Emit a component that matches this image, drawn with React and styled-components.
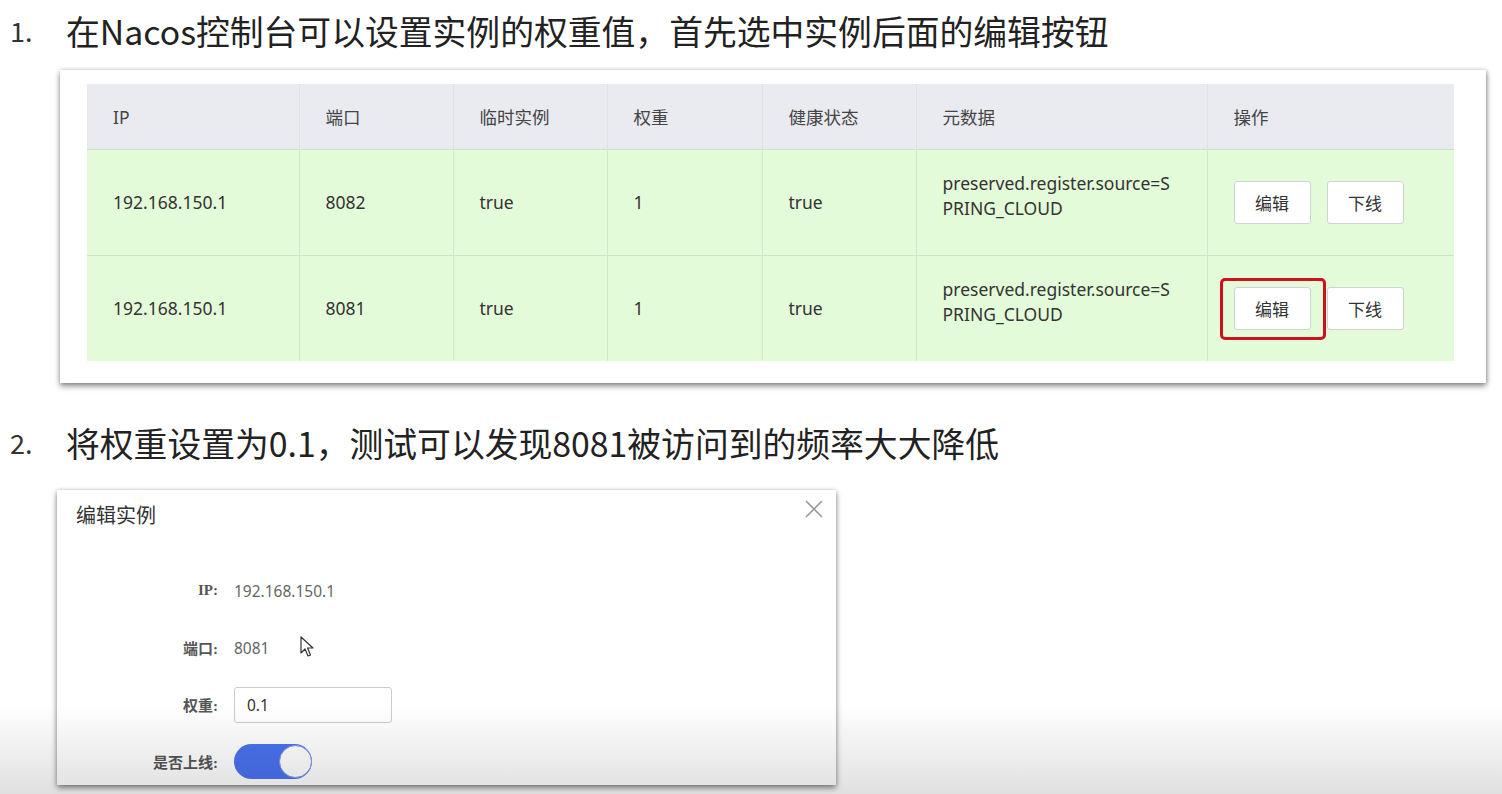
import React from "react";
import styled, { createGlobalStyle } from "styled-components";

const Global = createGlobalStyle`
  html, body { margin: 0; padding: 0; background: #fff; }
  body { font-family: "Noto Sans", "Noto Sans CJK SC", sans-serif; width: 1502px; height: 794px; overflow: hidden; }
`;

const Page = styled.div`
  position: relative;
  width: 1502px;
  height: 794px;
  display: flex;
  flex-direction: column;
`;

const Step = styled.div`
  display: flex;
  align-items: center;
  height: 60px;
  margin-top: ${p => p.$top}px;
  font-family: "Noto Sans CJK SC", "Noto Sans", sans-serif;
  font-size: 33.8px;
  color: #222;
`;

const StepNum = styled.span`
  width: 56px;
  padding-left: 10px;
  font-size: 27px;
  color: #333;
`;

const Shot = styled.div`
  margin: 10px 0 0 60px;
  width: 1426px;
  height: 313px;
  box-sizing: border-box;
  background: #fff;
  padding: 14px 32px 0 27px;
  box-shadow: 0 3px 6px rgba(0,0,0,0.45), 1px 0 4px rgba(0,0,0,0.2);
`;

const Table = styled.table`
  border-collapse: collapse;
  table-layout: fixed;
  width: 1367px;
  font-size: 17.5px;
  color: #333;
`;

const Th = styled.th`
  height: 65px;
  padding: 0 0 0 26px;
  text-align: left;
  font-weight: normal;
  background: #eaebf0;
  color: #444;
  line-height: 20px;
  border-left: 1px solid #dfe1e6;
  &:first-child { border-left: none; }
`;

const Td = styled.td`
  height: 105px;
  padding: 0 0 0 26px;
  background: #e4fbd9;
  border-left: 1px solid #d3e8c8;
  border-top: 1px solid #d0e3c6;
  line-height: 25px;
  &:first-child { border-left: none; }
`;

const Meta = styled.div`
  margin-top: -14px;
`;

const Actions = styled.div`
  display: flex;
  gap: 16px;
`;

const Btn = styled.button`
  width: 77px;
  height: 43px;
  background: #fff;
  border: 1px solid #cfd3d8;
  border-radius: 3px;
  font-family: "Noto Sans CJK SC", sans-serif;
  font-size: 17px;
  color: #333;
  padding: 0;
`;

const Marked = styled.span`
  position: relative;
  display: inline-flex;
  &::after {
    content: "";
    position: absolute;
    left: -14px;
    top: -9px;
    width: 100px;
    height: 56px;
    border: 3px solid #d0101f;
    border-radius: 5px;
  }
`;

const Dialog = styled.div`
  position: relative;
  margin: 18px 0 0 57px;
  width: 779px;
  height: 295px;
  box-sizing: border-box;
  background: #fff;
  box-shadow: 0 3px 6px rgba(0,0,0,0.45), 0 0 4px rgba(0,0,0,0.15);
  padding: 10px 0 0 19px;
`;

const DialogTitle = styled.div`
  font-family: "Noto Sans CJK SC", sans-serif;
  font-size: 20px;
  color: #333;
  height: 30px;
  line-height: 30px;
`;

const Close = styled.button`
  position: absolute;
  right: 12px;
  top: 10px;
  width: 20px;
  height: 20px;
  background: none;
  border: none;
  padding: 0;
  color: #999;
`;

const Form = styled.div`
  margin-top: 32px;
  display: grid;
  grid-template-columns: 142px auto;
  column-gap: 16px;
  grid-auto-rows: 57px;
  align-items: center;
`;

const Label = styled.div`
  text-align: right;
  font-family: "Liberation Serif", "Noto Sans CJK SC", serif;
  font-weight: bold;
  font-size: 15px;
  color: #555;
`;

const Value = styled.div`
  display: flex;
  align-items: center;
  font-size: 15.5px;
  color: #666;
`;

const Input = styled.div`
  width: 158px;
  height: 36px;
  box-sizing: border-box;
  border: 1px solid #ccc;
  border-radius: 3px;
  padding-left: 12px;
  display: flex;
  align-items: center;
  font-size: 15.5px;
  color: #333;
`;

const Switch = styled.div`
  width: 78px;
  height: 35px;
  box-sizing: border-box;
  border-radius: 18px;
  background: #4a72ef;
  display: flex;
  justify-content: flex-end;
  align-items: center;
`;

const Knob = styled.div`
  width: 33px;
  height: 33px;
  box-sizing: border-box;
  border-radius: 50%;
  background: #fff;
  border: 1px solid #7f93e8;
`;

const Cursor = styled.svg`
  position: absolute;
  left: 243px;
  top: 146px;
`;

const Shade = styled.div`
  position: absolute;
  left: 0;
  right: 0;
  bottom: 0;
  height: 90px;
  pointer-events: none;
  background: linear-gradient(to bottom, rgba(0,0,0,0), rgba(0,0,0,0.12));
`;

const cols = [212, 154, 154, 155, 154, 291, 247];
const headers = ["IP", "端口", "临时实例", "权重", "健康状态", "元数据", "操作"];
const rows = [
  { ip: "192.168.150.1", port: "8082", marked: false },
  { ip: "192.168.150.1", port: "8081", marked: true },
];

export default function App() {
  return (
    <Page>
      <Global />
      <Step $top={0}>
        <StepNum>1.</StepNum>
        在Nacos控制台可以设置实例的权重值，首先选中实例后面的编辑按钮
      </Step>
      <Shot>
        <Table>
          <colgroup>
            {cols.map((w, i) => <col key={i} style={{ width: w }} />)}
          </colgroup>
          <thead>
            <tr>{headers.map(h => <Th key={h}>{h}</Th>)}</tr>
          </thead>
          <tbody>
            {rows.map((r, i) => (
              <tr key={i}>
                <Td>{r.ip}</Td>
                <Td>{r.port}</Td>
                <Td>true</Td>
                <Td>1</Td>
                <Td>true</Td>
                <Td><Meta>preserved.register.source=S<br />PRING_CLOUD</Meta></Td>
                <Td>
                  <Actions>
                    {r.marked ? <Marked><Btn>编辑</Btn></Marked> : <Btn>编辑</Btn>}
                    <Btn>下线</Btn>
                  </Actions>
                </Td>
              </tr>
            ))}
          </tbody>
        </Table>
      </Shot>
      <Step $top={29}>
        <StepNum>2.</StepNum>
        将权重设置为0.1，测试可以发现8081被访问到的频率大大降低
      </Step>
      <Dialog>
        <DialogTitle>编辑实例</DialogTitle>
        <Close aria-label="close">
          <svg width="18" height="18" viewBox="0 0 18 18">
            <path d="M1 1 L17 17 M17 1 L1 17" stroke="#999" strokeWidth="1.6" />
          </svg>
        </Close>
        <Form>
          <Label>IP:</Label>
          <Value>192.168.150.1</Value>
          <Label>端口:</Label>
          <Value>8081</Value>
          <Label>权重:</Label>
          <Value><Input>0.1</Input></Value>
          <Label>是否上线:</Label>
          <Value><Switch><Knob /></Switch></Value>
        </Form>
        <Cursor width="16" height="22" viewBox="0 0 16 22">
          <path d="M1 1 L1 17 L5 13 L8 20 L10.5 19 L7.5 12 L13 12 Z" fill="#fff" stroke="#333" strokeWidth="1.2" strokeLinejoin="round" />
        </Cursor>
      </Dialog>
      <Shade />
    </Page>
  );
}
